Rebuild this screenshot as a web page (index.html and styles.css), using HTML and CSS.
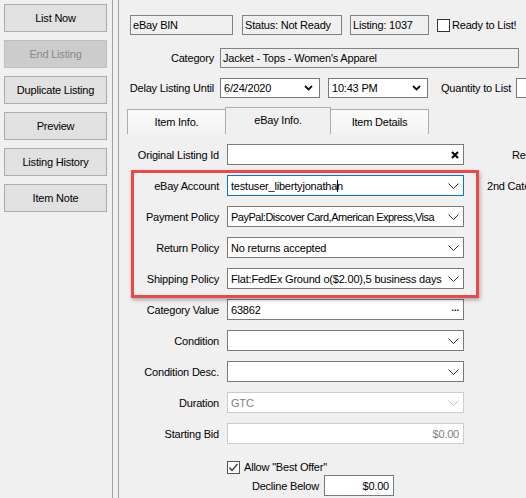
FILE: index.html
```html
<!DOCTYPE html>
<html lang="en">
  <head>
    <meta charset="UTF-8" />
    <title>Listing Editor</title>
    <link rel="stylesheet" href="styles.css">
  </head>
  <body>
    <div class="app">
      <!-- left action buttons -->
      <div class="sidebar">
        <button class="side-btn">List Now</button>
        <button class="side-btn" disabled>End Listing</button>
        <button class="side-btn">Duplicate Listing</button>
        <button class="side-btn">Preview</button>
        <button class="side-btn">Listing History</button>
        <button class="side-btn">Item Note</button>
      </div>

      <div class="splitter"></div>

      <div class="main">
        <!-- header info -->
        <div class="top-row">
          <div class="ro-box w-bin">eBay BIN</div>
          <div class="ro-box w-status">Status: Not Ready</div>
          <div class="ro-box w-listing">Listing: 1037</div>
          <span class="check"></span>
          <span>Ready to List!</span>
        </div>

        <div class="head-row">
          <span class="head-label">Category</span>
          <div class="ro-box w-cat">Jacket - Tops - Women's Apparel</div>
        </div>

        <div class="head-row">
          <span class="head-label">Delay Listing Until</span>
          <div class="picker w-date">
            <span class="combo-text">6/24/2020</span>
            <svg width="9" height="6" viewBox="0 0 9 6"><polyline points="1,1 4.5,4.5 8,1" fill="none" stroke="#111" stroke-width="1.8"/></svg>
          </div>
          <div class="picker w-time">
            <span class="combo-text">10:43 PM</span>
            <svg width="9" height="6" viewBox="0 0 9 6"><polyline points="1,1 4.5,4.5 8,1" fill="none" stroke="#111" stroke-width="1.8"/></svg>
          </div>
          <span class="qty-label">Quantity to List</span>
          <div class="field w-qty"></div>
        </div>

        <!-- tabs -->
        <div class="tabs">
          <div class="tab">Item Info.</div>
          <div class="tab active">eBay Info.</div>
          <div class="tab">Item Details</div>
        </div>

        <!-- eBay info form -->
        <div class="form">
          <div class="row">
            <span class="label">Original Listing Id</span>
            <div class="field">
              <span class="combo-text"></span>
              <svg width="8" height="8" viewBox="0 0 8 8"><path d="M1 1 L7 7 M7 1 L1 7" stroke="#000" stroke-width="2"/></svg>
            </div>
            <span class="side-label re">Re</span>
          </div>

          <div class="row">
            <span class="label">eBay Account</span>
            <div class="field focus">
              <span class="combo-text">testuser_libertyjonatha<span class="caret"></span>n</span>
              <svg class="chev" width="11" height="6" viewBox="0 0 11 6"><polyline points="0.5,0.5 5.5,5.5 10.5,0.5" fill="none" stroke="#333"/></svg>
            </div>
            <span class="side-label cat2">2nd Category</span>
          </div>

          <div class="row">
            <span class="label">Payment Policy</span>
            <div class="field">
              <span class="combo-text tight">PayPal:Discover Card,American Express,Visa</span>
              <svg class="chev" width="11" height="6" viewBox="0 0 11 6"><polyline points="0.5,0.5 5.5,5.5 10.5,0.5" fill="none" stroke="#333"/></svg>
            </div>
          </div>

          <div class="row">
            <span class="label">Return Policy</span>
            <div class="field">
              <span class="combo-text">No returns accepted</span>
              <svg class="chev" width="11" height="6" viewBox="0 0 11 6"><polyline points="0.5,0.5 5.5,5.5 10.5,0.5" fill="none" stroke="#333"/></svg>
            </div>
          </div>

          <div class="row">
            <span class="label">Shipping Policy</span>
            <div class="field">
              <span class="combo-text">Flat:FedEx Ground o($2.00),5 business days</span>
              <svg class="chev" width="11" height="6" viewBox="0 0 11 6"><polyline points="0.5,0.5 5.5,5.5 10.5,0.5" fill="none" stroke="#333"/></svg>
            </div>
          </div>

          <div class="row">
            <span class="label">Category Value</span>
            <div class="field">
              <span class="combo-text">63862</span>
              <span class="dots">...</span>
            </div>
          </div>

          <div class="row">
            <span class="label">Condition</span>
            <div class="field">
              <span class="combo-text"></span>
              <svg class="chev" width="11" height="6" viewBox="0 0 11 6"><polyline points="0.5,0.5 5.5,5.5 10.5,0.5" fill="none" stroke="#333"/></svg>
            </div>
          </div>

          <div class="row">
            <span class="label">Condition Desc.</span>
            <div class="field">
              <span class="combo-text"></span>
              <svg class="chev" width="11" height="6" viewBox="0 0 11 6"><polyline points="0.5,0.5 5.5,5.5 10.5,0.5" fill="none" stroke="#333"/></svg>
            </div>
          </div>

          <div class="row">
            <span class="label">Duration</span>
            <div class="field disabled">
              <span class="combo-text">GTC</span>
              <svg class="chev" width="11" height="6" viewBox="0 0 11 6"><polyline points="0.5,0.5 5.5,5.5 10.5,0.5" fill="none" stroke="#bdbdbd"/></svg>
            </div>
          </div>

          <div class="row">
            <span class="label">Starting Bid</span>
            <div class="field disabled money">$0.00</div>
          </div>

          <div class="check-row">
            <span class="check checked">
              <svg width="11" height="11" viewBox="0 0 11 11"><polyline points="1.5,5.5 4,8.5 9.5,2" fill="none" stroke="#333" stroke-width="1.2"/></svg>
            </span>
            <span>Allow "Best Offer"</span>
          </div>

          <div class="decline-row">
            <span class="label wide">Decline Below</span>
            <div class="field money w-decline">$0.00</div>
          </div>

          <!-- red annotation over the policy rows -->
          <div class="highlight"></div>
        </div>
      </div>
    </div>
  </body>
</html>
```

FILE: styles.css
```css
/* reset */
* {
  margin: 0;
  padding: 0;
  box-sizing: border-box;
}

body {
  font-family: "Liberation Sans", Arial, sans-serif;
  font-size: 11px;
  letter-spacing: -0.2px;
  color: #000;
  background-color: #f0f0f0;
  width: 526px;
  height: 498px;
  overflow: hidden;
  white-space: nowrap;
}

.app {
  display: flex;
  height: 498px;
}

/* sidebar */
.sidebar {
  width: 112px;
  flex-shrink: 0;
  padding: 4px 0 0 4px;
  display: flex;
  flex-direction: column;
  gap: 8px;
}

.side-btn {
  width: 103px;
  height: 28px;
  background-color: #e1e1e1;
  border: 1px solid #adadad;
  font: inherit;
  letter-spacing: inherit;
  color: #000;
}

.side-btn:disabled {
  background-color: #cccccc;
  border-color: #bfbfbf;
  color: #8a8a8a;
}

.splitter {
  width: 7px;
  flex-shrink: 0;
  border-left: 1px solid #a0a0a0;
  border-right: 1px solid #a0a0a0;
}

/* main area */
.main {
  flex: 1;
  padding-top: 15px;
  display: flex;
  flex-direction: column;
}

.top-row {
  display: flex;
  align-items: center;
  height: 20px;
  padding-left: 11px;
}

.ro-box {
  height: 20px;
  border: 1px solid #828282;
  background-color: #f0f0f0;
  padding: 0 2px;
  display: flex;
  align-items: center;
  flex-shrink: 0;
}

.w-bin { width: 103px; margin-right: 9px; }
.w-status { width: 100px; margin-right: 8px; }
.w-listing { width: 79px; margin-right: 8px; }
.w-cat { width: 299px; }

.check {
  width: 13px;
  height: 13px;
  border: 1px solid #333;
  background-color: #fff;
  margin-right: 2px;
  flex-shrink: 0;
  display: flex;
  align-items: center;
  justify-content: center;
}

.head-row {
  display: flex;
  align-items: center;
  height: 20px;
  margin-top: 13px;
}

.head-row + .head-row {
  margin-top: 10px;
}

.head-label {
  width: 95px;
  text-align: right;
  margin-right: 6px;
  flex-shrink: 0;
}

.picker {
  height: 20px;
  background-color: #fff;
  border: 1px solid #7a7a7a;
  display: flex;
  align-items: center;
  padding: 0 6px 0 3px;
  flex-shrink: 0;
}

.w-date { width: 100px; margin-right: 8px; }
.w-time { width: 100px; }

.qty-label {
  margin-left: 13px;
  margin-right: 5px;
}

.head-row .w-qty {
  width: 40px;
  height: 20px;
  flex-shrink: 0;
}

/* tabs */
.tabs {
  display: flex;
  align-items: flex-end;
  height: 29px;
  margin-top: 7px;
  padding-left: 8px;
}

.tab {
  width: 99px;
  height: 25px;
  border: 1px solid #adadad;
  border-bottom: none;
  background: linear-gradient(#fbfbfb, #f3f3f3);
  display: flex;
  align-items: center;
  justify-content: center;
  flex-shrink: 0;
}

.tab.active {
  width: 106px;
  height: 27px;
  margin-left: -1px;
  margin-right: -1px;
  background: #f0f0f0;
  padding-bottom: 2px;
}

/* form */
.form {
  position: relative;
  padding-top: 10px;
  display: flex;
  flex-direction: column;
  gap: 10px;
}

.row {
  display: flex;
  align-items: center;
  height: 21px;
}

.label {
  width: 100px;
  text-align: right;
  margin-right: 8px;
  flex-shrink: 0;
}

.field {
  width: 237px;
  height: 21px;
  background-color: #fff;
  border: 1px solid #7a7a7a;
  display: flex;
  align-items: center;
  padding: 0 4px 0 3px;
  flex-shrink: 0;
}

.field.focus {
  border-color: #0078d7;
}

.field.disabled {
  border-color: #cccccc;
  color: #808080;
}

.combo-text {
  flex: 1;
  overflow: hidden;
}

.combo-text.tight {
  letter-spacing: -0.5px;
}

.chev {
  flex-shrink: 0;
  margin-left: 3px;
}

.caret {
  display: inline-block;
  width: 1px;
  height: 12px;
  background-color: #000;
  vertical-align: -2px;
  margin-right: -1px;
}

.dots {
  font-weight: bold;
  font-size: 9px;
  letter-spacing: 0;
  margin-top: -4px;
}

.money {
  justify-content: flex-end;
}

.side-label.re { margin-left: 48px; }
.side-label.cat2 { margin-left: 23px; }

.check-row {
  display: flex;
  align-items: center;
  height: 16px;
  margin-top: 5px;
  padding-left: 108px;
}

.check-row .check {
  border-color: #555;
  margin-right: 4px;
}

.decline-row {
  display: flex;
  align-items: center;
  height: 21px;
  margin-top: -10px;
}

.label.wide {
  width: 200px;
  margin-right: 5px;
}

.w-decline {
  width: 70px;
}

.highlight {
  position: absolute;
  left: 12px;
  top: 36px;
  width: 348px;
  height: 128px;
  border: 3px solid #ef4646;
  box-shadow: 1px 2px 4px rgba(0, 0, 0, 0.3);
}
```
